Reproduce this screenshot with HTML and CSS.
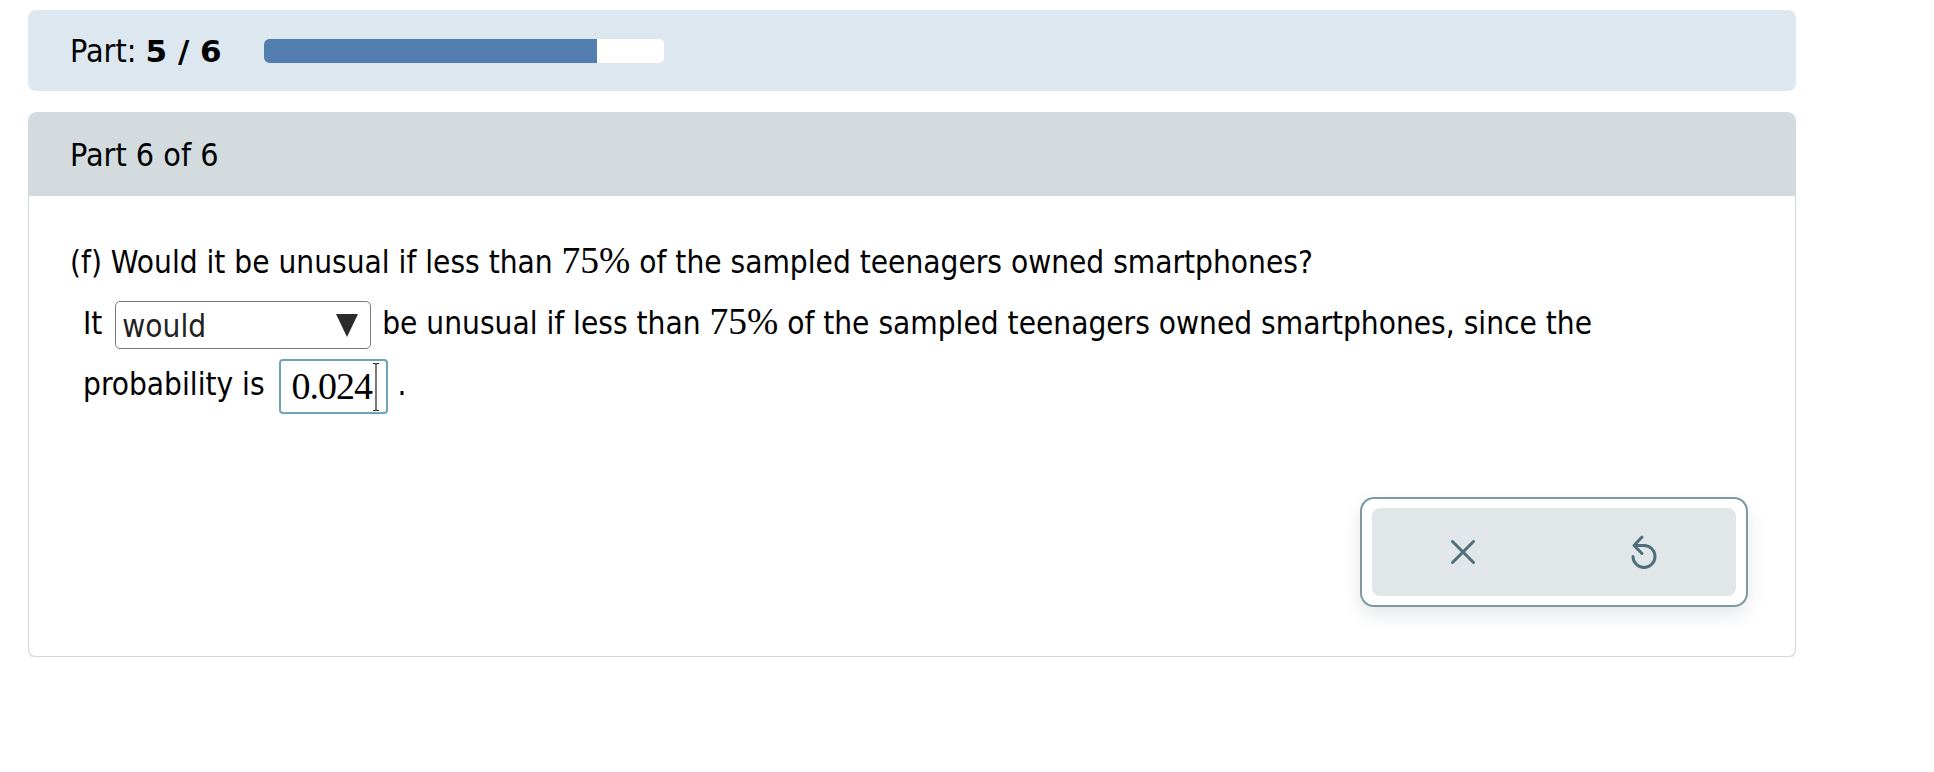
FILE: index.html
```html
<!DOCTYPE html>
<html lang="en">
<head>
<meta charset="utf-8">
<title>Part 6 of 6</title>
<link rel="stylesheet" href="styles.css">
</head>
<body>
<div class="page">
  <div class="topbar">
    <span class="part-label">Part: <b>5 / 6</b></span>
    <div class="progress"><div class="progress-fill" style="width:83.33%"></div></div>
  </div>

  <div class="card">
    <div class="card-header">Part 6 of 6</div>
    <div class="card-body">
      <p class="question">(f) Would it be unusual if less than <span class="math">75%</span> of the sampled teenagers owned smartphones?</p>
      <div class="answer">
        <div class="row">It <span class="select"><span class="select-value">would</span><svg class="select-arrow" width="22" height="23" viewBox="0 0 22 23"><polygon points="0,0 22,0 11,23" fill="#2b2b2b"/></svg></span> be unusual if less than <span class="math">75%</span> of the sampled teenagers owned smartphones, since the</div>
        <div class="row">probability is <span class="input">0.024<svg class="ibeam" width="8" height="50" viewBox="0 0 8 50"><path d="M1 1.5 H3 Q4 1.5 4 3 V47 Q4 48.5 3 48.5 H1 M7 1.5 H5 Q4 1.5 4 3 M4 47 Q4 48.5 5 48.5 H7" fill="none" stroke="#fff" stroke-width="2.6"/><path d="M1 1.5 H3 Q4 1.5 4 3 V47 Q4 48.5 3 48.5 H1 M7 1.5 H5 Q4 1.5 4 3 M4 47 Q4 48.5 5 48.5 H7" fill="none" stroke="#222" stroke-width="1.2"/></svg></span><span class="dot">.</span></div>
      </div>
      <div class="actions">
        <div class="btn-group">
          <div class="btn-inner">
            <button class="icon-btn" type="button" aria-label="Clear">
              <svg width="26" height="26" viewBox="0 0 26 26"><path d="M2.5 2.5 L23.5 23.5 M23.5 2.5 L2.5 23.5" stroke="#4d6e7b" stroke-width="3" stroke-linecap="round" fill="none"/></svg>
            </button>
            <button class="icon-btn" type="button" aria-label="Undo">
              <svg width="30" height="36" viewBox="0 0 30 36"><path d="M12 3 L4 11.5 L12 19.5 M4.2 11.5 H14 A11 11 0 1 1 3 22.5" stroke="#4d6e7b" stroke-width="3" stroke-linecap="round" stroke-linejoin="round" fill="none"/></svg>
            </button>
          </div>
        </div>
      </div>
    </div>
  </div>
</div>
</body>
</html>
```

FILE: styles.css
```css
* { box-sizing: border-box; }

body {
  margin: 0;
  background: #ffffff;
  color: #000000;
  font-family: "DejaVu Sans Condensed", "DejaVu Sans", sans-serif;
  font-size: 31.3px;
}

.page {
  width: 1796px;
  padding: 10px 0 0 28px;
}

.topbar {
  height: 81px;
  background: #dde7f0;
  border-radius: 8px;
  display: flex;
  align-items: center;
  padding-left: 42px;
  font-size: 32px;
}

.part-label {
  margin-right: 42px;
  line-height: 1;
}

.part-label b {
  font-family: "DejaVu Sans", sans-serif;
  font-weight: bold;
  font-size: 31px;
}

.progress {
  width: 400px;
  height: 24px;
  background: #ffffff;
  border-radius: 5px;
  overflow: hidden;
}

.progress-fill {
  height: 100%;
  background: #527fb0;
  border-radius: 5px 0 0 5px;
}

.card {
  margin-top: 21px;
  border: 1px solid #d3dadf;
  border-radius: 8px;
  box-shadow: 0 1px 0 #d3dadf;
}

.card-header {
  height: 83px;
  background: #d3dbdf;
  border-radius: 7px 7px 0 0;
  display: flex;
  align-items: center;
  padding-left: 41px;
  font-size: 32px;
}

.card-body {
  padding: 34px 47px 49px 41px;
}

.question {
  margin: 0;
  line-height: 62px;
  white-space: nowrap;
}

.math {
  font-family: "Liberation Serif", serif;
  font-size: 37.5px;
}

.answer {
  padding-left: 13px;
  margin-top: -2px;
  margin-bottom: 3px;
}

.row {
  height: 62px;
  line-height: 62px;
  white-space: nowrap;
}

.select {
  display: inline-flex;
  align-items: center;
  justify-content: space-between;
  vertical-align: middle;
  width: 256px;
  height: 48px;
  margin: 0 2px 0 4px;
  padding: 0 12px 0 6px;
  border: 1.5px solid #7a7a7a;
  border-radius: 5px;
  line-height: 1;
  color: #222;
}

.select-value {
  padding-top: 4px;
}

.input {
  position: relative;
  display: inline-block;
  vertical-align: middle;
  width: 109px;
  height: 55px;
  margin: 0 7px 0 5px;
  padding-left: 11px;
  border: 2px solid #6fa3b8;
  border-radius: 4px;
  font-family: "Liberation Serif", serif;
  font-size: 38px;
  letter-spacing: -1px;
  line-height: 51px;
}

.ibeam {
  position: absolute;
  left: 91px;
  top: 1px;
}

.dot {
  margin-left: 3px;
}

.actions {
  display: flex;
  justify-content: flex-end;
  margin-top: 82px;
}

.btn-group {
  width: 388px;
  height: 110px;
  padding: 9px 10px;
  border: 2px solid #7f98a3;
  border-radius: 14px;
  background: #ffffff;
  box-shadow: 0 8px 18px rgba(40, 60, 70, 0.12);
}

.btn-inner {
  height: 100%;
  display: flex;
  background: #e1e6e9;
  border-radius: 8px;
}

.icon-btn {
  flex: 1;
  display: flex;
  align-items: center;
  justify-content: center;
  border: none;
  background: transparent;
  padding: 0;
}
```
